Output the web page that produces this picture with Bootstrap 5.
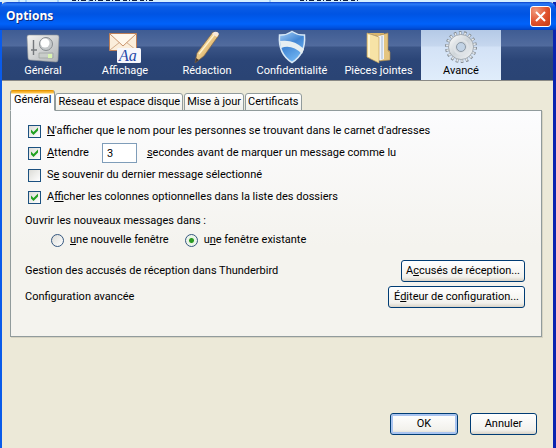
<!DOCTYPE html>
<html lang="fr">
<head>
<meta charset="utf-8">
<meta name="viewport" content="width=device-width, initial-scale=1">
<title>Options</title>
<link href="https://cdn.jsdelivr.net/npm/bootstrap@5.3.0/dist/css/bootstrap.min.css" rel="stylesheet">
<style>
body{font:11px/14px Roboto,"Liberation Sans",sans-serif;color:#000;background:#ece9d8}
.desk{height:2px;background:#d5efff;overflow:hidden}
.desk svg{display:block}
.win{border-left:2px solid #0a5bea;border-right:3px solid #0a24b0}
.titlebar{height:28px;margin:0 -3px 0 -2px;padding:0 5px 0 6px;border-radius:7px 7px 0 0;background:linear-gradient(#0a3fc8,#2a7cf8 2px,#0a5ce6 5px,#0054e3 12px,#0062fa 22px,#0050dc 26px,#0040c0)}
.caption{font:bold 12px/18px "Open Sans","Noto Sans",sans-serif;color:#fff;text-shadow:1px 1px 0 #0a2a80}
.close-x{width:21px;height:21px;border:1px solid #fff;border-radius:3px;background:radial-gradient(circle at 25% 20%,#f0997c,#e0512c 55%,#c13a12)}
.tools{height:51px;background:linear-gradient(#3f5c93,#516b9e 16px,#3a5486 17px,#2b4577 30px,#2a4474 49px);border-bottom:1px solid #8a8a86}
.tool{color:#fff;flex:0 0 82px;border:0;background:none}
.tool svg{display:block;height:34px;width:40px}
.tool-mid{flex-basis:88px}
.tool-end{flex-basis:85px}
.tool-on{flex-basis:80px;color:#000;background:linear-gradient(#b4c9e6,#c6d7ee 16px,#d3e2f6 17px,#e0edfb)}
.tabrow{height:21px;margin:9px 8px -1px}
.tabx{height:18px;padding:0 2px;border:1px solid #919b9c;border-radius:3px 3px 0 0;background:linear-gradient(#fff,#f0f0ea);color:#000;white-space:nowrap}
.tabx.active{height:21px;padding:0 3px 2px;background:linear-gradient(#f0a020,#ffc848 2px,#fdfdfe 3px);border-top-color:#e59700;border-bottom-color:#fcfcfe;z-index:1}
.tabx + .tabx + .tabx{margin-left:1px}
.pane{margin:0 11px 0 8px;padding:9px 16px 28px 14px;border:1px solid #919b9c;box-shadow:1px 1px 0 #d6d3c2;background:linear-gradient(#fcfcfe,#f4f3ee 60%)}
.opt{height:22px;padding-left:3px}
.tick,.dot{appearance:none;flex:none;width:13px;height:13px;margin:0;border:1px solid #1c5180;background:linear-gradient(135deg,#dcdcd7,#fff)}
.tick + label,.dot + label{margin-left:6px}
.tick:checked{background:url("data:image/svg+xml,%3Csvg xmlns='http://www.w3.org/2000/svg' viewBox='0 0 11 11'%3E%3Cpath d='M2 3.500L4.500 6L9 1.500V4.500L4.500 9L2 6.500Z' fill='%2321a121'/%3E%3C/svg%3E"),linear-gradient(135deg,#dcdcd7,#fff)}
.open-in{margin-top:6px}
.radios{padding-left:26px;height:24px}
.dot{border-radius:50%;border-color:#34577f}
.dot:checked{background:radial-gradient(circle,#2a9a22 0 2px,#e8f4e4 3px,#f8f8f4)}
.delay{width:35px;height:20px;margin:0 10px 0 13px;padding:0 4px;border:1px solid #7f9db9;background:#fff}
.xp{height:22px;padding:0;border:1px solid #003c74;border-radius:3px;background:linear-gradient(#fff,#f2f1ec 80%,#d8d2c6);color:#000}
.xp-a{width:124px}
.xp-b{width:137px}
.xp-c{width:67px}
.xp-ok{width:68px;box-shadow:inset 0 0 0 2px #a9c4f0}
.actions{padding:76px 16px 13px 0;gap:12px}
</style>
<script src="https://cdn.jsdelivr.net/npm/bootstrap@5.3.0/dist/js/bootstrap.bundle.min.js"></script>
</head>
<body class="d-flex flex-column min-vh-100">
<div class="desk"><svg width="556" height="2" aria-hidden="true"><path d="M72 0h81M300 0h58" stroke="#102040" stroke-width="2" stroke-dasharray="4 2 1 2 5 3"/><path d="M19 0v3M26 0v3M58 0v3M89 0v3M270 0v3" stroke="#78b4f0"/></svg></div>
<main class="win flex-grow-1">
<header class="titlebar d-flex align-items-center justify-content-between">
<h1 class="caption m-0">Options</h1>
<button class="close-x p-0 d-flex align-items-center justify-content-center" aria-label="Fermer"><svg width="13" height="13" aria-hidden="true"><path d="M2 2l9 9M11 2l-9 9" stroke="#fff" stroke-width="2"/></svg></button>
</header>
<nav class="tools d-flex">
<button class="tool p-0 d-flex flex-column align-items-center"><svg viewBox="0 0 40 34" aria-hidden="true"><defs><linearGradient id="gp" x2="1" y2="1"><stop stop-color="#f4f4f2"/><stop offset="1" stop-color="#aeb2b5"/></linearGradient></defs><path d="M6 5h28q2 0 2 2l-1 23q0 2-2 2L7 30q-2 0-2-2L4 7q0-2 2-2z" fill="url(#gp)" stroke="#8b9197" stroke-width=".6"/><path d="M10.500 10v15M8 20h6" stroke="#74787c" stroke-width="1.400"/><circle cx="23" cy="14" r="6.500" fill="#c4c8ca" stroke="#878c90"/><circle cx="22" cy="13" r="4.500" fill="#fff"/><path d="M16 23h14v5H16z" fill="#c9cdca" stroke="#989d9c" stroke-width=".7"/><path d="M25 24h4v4h-4z" fill="#d9f5b0"/></svg>Général</button>
<button class="tool p-0 d-flex flex-column align-items-center"><svg viewBox="0 0 40 34" aria-hidden="true"><path d="M4.500 3.500h27v17h-27z" fill="#fbeedb" stroke="#bd8059"/><path d="M5 20l10-8M31 20l-10-8" stroke="#d3ad8b"/><path d="M5 4l13 12L31 4" fill="#fff8ec" stroke="#c9946d"/><rect x="12" y="18" width="24" height="15" rx="1.500" fill="#f6f7fc"/><text x="14" y="31" font-family="Liberation Serif,serif" font-style="italic" font-size="16" fill="#2447a8">Aa</text></svg>Affichage</button>
<button class="tool p-0 d-flex flex-column align-items-center"><svg viewBox="0 0 40 34" aria-hidden="true"><defs><linearGradient id="pn" x2="1" y2="1"><stop stop-color="#fff2c4"/><stop offset=".5" stop-color="#e9c581"/><stop offset="1" stop-color="#a77739"/></linearGradient></defs><path d="M8 33l2-10L26 2l6 3L17 26z" fill="url(#pn)" stroke="#7c6347" stroke-width=".7"/><path d="M27 2q4-1 5 2l-2 3-5-3z" fill="#f7e8da"/><path d="M27 5L12 24" stroke="#fff3cf" stroke-width="1.300"/><path d="M8 33l1-5 3 2z" fill="#493b34"/></svg>Rédaction</button>
<button class="tool tool-mid p-0 d-flex flex-column align-items-center"><svg viewBox="0 0 40 34" aria-hidden="true"><defs><linearGradient id="sh" y2="1" x2=".5"><stop stop-color="#a9d0f6"/><stop offset=".5" stop-color="#4186d4"/><stop offset="1" stop-color="#6fb4f2"/></linearGradient></defs><path d="M20 1.500q6 4 12.500 3.500Q34 24 20 32.500 6 24 7.500 5 14 5.500 20 1.500z" fill="url(#sh)" stroke="#d7e8f6" stroke-width="1.500"/><path d="M8 11q14-2 24 8l-2 5Q20 14 9 18z" fill="#e6eff2"/></svg>Confidentialité</button>
<button class="tool tool-end p-0 d-flex flex-column align-items-center"><svg viewBox="0 0 40 34" aria-hidden="true"><path d="M8 3h17v23l6 3V21l-2-1V8h-4" fill="#d9b66d"/><path d="M21 5l8-2v18l2 1v8l-10 1z" fill="#e4c580" stroke="#a9884d" stroke-width=".6"/><path d="M19 6l6-1v24l-6 2z" fill="#eef3fa"/><path d="M23 6v23" stroke="#a6b8cd"/><path d="M8 3l12 4v26L8 27z" fill="#f7e3a6" stroke="#c7a360" stroke-width=".7"/><path d="M10 5v22" stroke="#fff5cf" stroke-width="2"/></svg>Pièces jointes</button>
<button class="tool tool-on p-0 d-flex flex-column align-items-center" aria-current="page"><svg viewBox="0 0 40 34" aria-hidden="true"><defs><linearGradient id="gg" x2="1" y2="1"><stop stop-color="#fff"/><stop offset=".5" stop-color="#cfd5d9"/><stop offset="1" stop-color="#f3f5f7"/></linearGradient></defs><circle cx="20" cy="17" r="14" fill="none" stroke="#868e95" stroke-width="4" stroke-dasharray="2.500 2.387"/><circle cx="20" cy="17" r="13.500" fill="none" stroke="#e6eaed" stroke-width="3" stroke-dasharray="1.500 3.212" stroke-dashoffset="-.5"/><circle cx="20" cy="17" r="12.500" fill="url(#gg)" stroke="#959da4" stroke-width=".8"/><circle cx="20" cy="17" r="7" fill="none" stroke="#dfe3e7" stroke-width="2"/><circle cx="20" cy="17" r="4.500" fill="#c2d3e5" stroke="#8c98a5"/></svg>Avancé</button>
</nav>
<div class="tabrow d-flex align-items-end" role="tablist">
<button class="tabx active position-relative" role="tab" aria-selected="true">Général</button>
<button class="tabx" role="tab" aria-selected="false">Réseau et espace disque</button>
<button class="tabx" role="tab" aria-selected="false">Mise à jour</button>
<button class="tabx" role="tab" aria-selected="false">Certificats</button>
</div>
<section class="pane" role="tabpanel">
<div class="opt d-flex align-items-center"><input class="tick" type="checkbox" id="c1" checked><label for="c1"><u>N</u>'afficher que le nom pour les personnes se trouvant dans le carnet d'adresses</label></div>
<div class="opt d-flex align-items-center"><input class="tick" type="checkbox" id="c2" checked><label for="c2"><u>A</u>ttendre</label><input class="delay" type="text" id="sec" value="3"><label for="sec"><u>s</u>econdes avant de marquer un message comme lu</label></div>
<div class="opt d-flex align-items-center"><input class="tick" type="checkbox" id="c3"><label for="c3">S<u>e</u> souvenir du dernier message sélectionné</label></div>
<div class="opt d-flex align-items-center"><input class="tick" type="checkbox" id="c4" checked><label for="c4">A<u>f</u>ficher les colonnes optionnelles dans la liste des dossiers</label></div>
<div class="open-in">Ouvrir les nouveaux messages dans :</div>
<div class="radios d-flex align-items-center"><input class="dot" type="radio" name="o" id="r1"><label for="r1"><u>u</u>ne nouvelle fenêtre</label><input class="dot ms-3" type="radio" name="o" id="r2" checked><label for="r2">u<u>n</u>e fenêtre existante</label></div>
<div class="d-flex align-items-center justify-content-between mt-2">Gestion des accusés de réception dans Thunderbird<button class="xp xp-a">A<u>c</u>cusés de réception...</button></div>
<div class="d-flex align-items-center justify-content-between mt-1">Configuration avancée<button class="xp xp-b">É<u>d</u>iteur de configuration...</button></div>
</section>
<footer class="actions d-flex justify-content-end"><button class="xp xp-ok">OK</button><button class="xp xp-c">Annuler</button></footer>
</main>
</body>
</html>
